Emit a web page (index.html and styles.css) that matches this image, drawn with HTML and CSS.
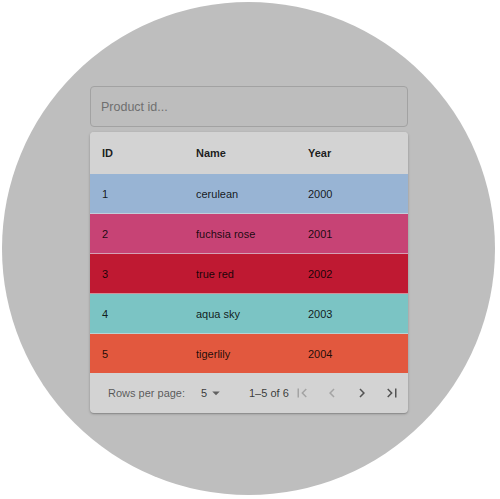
FILE: index.html
```html
<!DOCTYPE html>
<html lang="en">

<head>
    <meta charset="UTF-8">
    <meta name="viewport" content="width=device-width, initial-scale=1.0">
    <title>Products</title>
    <link rel="stylesheet" href="styles.css">
</head>

<body>
    <div class="circle">
        <div class="panel">
            <input class="search" type="text" placeholder="Product id...">

            <div class="card">
                <div class="row head">
                    <span>ID</span>
                    <span>Name</span>
                    <span>Year</span>
                </div>
                <div class="row" style="background-color: #98B4D4;">
                    <span>1</span>
                    <span>cerulean</span>
                    <span>2000</span>
                </div>
                <div class="row" style="background-color: #C74375;">
                    <span>2</span>
                    <span>fuchsia rose</span>
                    <span>2001</span>
                </div>
                <div class="row" style="background-color: #BF1932;">
                    <span>3</span>
                    <span>true red</span>
                    <span>2002</span>
                </div>
                <div class="row" style="background-color: #7BC4C4;">
                    <span>4</span>
                    <span>aqua sky</span>
                    <span>2003</span>
                </div>
                <div class="row last" style="background-color: #E2583E;">
                    <span>5</span>
                    <span>tigerlily</span>
                    <span>2004</span>
                </div>

                <div class="footer">
                    <span class="label">Rows per page:</span>
                    <span class="select">5
                        <svg viewBox="0 0 24 24" width="18" height="18"><path d="M7 10l5 5 5-5z"/></svg>
                    </span>
                    <span class="range">1–5 of 6</span>
                    <span class="btn off">
                        <svg viewBox="0 0 24 24" width="18" height="18"><path d="M18.41 16.59L13.82 12l4.59-4.59L17 6l-6 6 6 6zM6 6h2v12H6z"/></svg>
                    </span>
                    <span class="btn off">
                        <svg viewBox="0 0 24 24" width="18" height="18"><path d="M15.41 16.59L10.83 12l4.58-4.59L14 6l-6 6 6 6 1.41-1.41z"/></svg>
                    </span>
                    <span class="btn">
                        <svg viewBox="0 0 24 24" width="18" height="18"><path d="M8.59 16.59L13.17 12 8.59 7.41 10 6l6 6-6 6-1.41-1.41z"/></svg>
                    </span>
                    <span class="btn">
                        <svg viewBox="0 0 24 24" width="18" height="18"><path d="M5.59 7.41L10.18 12l-4.59 4.59L7 18l6-6-6-6zM16 6h2v12h-2z"/></svg>
                    </span>
                </div>
            </div>
        </div>
    </div>
</body>

</html>
```

FILE: styles.css
```css
body {
    font-family: Arial, "Liberation Sans", sans-serif;
    background-color: #fff;
    margin: 0;
    padding: 2px;
}

.circle {
    width: 493px;
    height: 493px;
    border-radius: 50%;
    background-color: #bebebe;
    box-sizing: border-box;
    padding: 84px 0 0 88px;
}

.panel {
    width: 318px;
}

.search {
    display: block;
    width: 100%;
    height: 41px;
    box-sizing: border-box;
    padding: 0 10px;
    margin: 0 0 5px;
    border: 1px solid #a2a2a2;
    border-radius: 4px;
    background-color: #bdbdbd;
    font-family: inherit;
    font-size: 12.5px;
    color: #333;
    outline: none;
}

.search::placeholder {
    color: #6f6f6f;
}

.card {
    background-color: #d3d3d3;
    border-radius: 4px;
    overflow: hidden;
    box-shadow: 0 1px 3px rgba(0, 0, 0, 0.2), 0 1px 1px rgba(0, 0, 0, 0.14);
}

.row {
    display: grid;
    grid-template-columns: 94px 112px 1fr;
    align-items: center;
    height: 39px;
    padding-left: 12px;
    border-bottom: 1px solid rgba(224, 224, 224, 0.6);
    font-size: 11px;
    color: rgba(0, 0, 0, 0.87);
}

.row.head {
    height: 42px;
    border-bottom: none;
    font-weight: bold;
    background-color: #d3d3d3;
}

.row.last {
    border-bottom: none;
    height: 39px;
}

.footer {
    display: flex;
    align-items: center;
    height: 40px;
    padding-left: 18px;
    font-size: 11px;
    color: rgba(0, 0, 0, 0.6);
    white-space: nowrap;
}

.label {
    width: 93px;
    flex-shrink: 0;
}

.select {
    display: flex;
    align-items: center;
    width: 48px;
    flex-shrink: 0;
    color: rgba(0, 0, 0, 0.75);
}

.select svg {
    fill: rgba(0, 0, 0, 0.54);
}

.range {
    width: 38px;
    flex-shrink: 0;
    color: rgba(0, 0, 0, 0.75);
}

.btn {
    display: flex;
    justify-content: center;
    width: 30px;
    flex-shrink: 0;
}

.btn svg {
    fill: rgba(0, 0, 0, 0.6);
}

.btn.off svg {
    fill: rgba(0, 0, 0, 0.22);
}
```
